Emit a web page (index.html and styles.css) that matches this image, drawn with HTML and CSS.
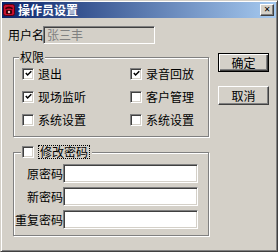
FILE: index.html
```html
<!DOCTYPE html>
<html lang="zh-CN">
<head>
    <meta charset="UTF-8">
    <title>操作员设置</title>
    <link rel="stylesheet" href="styles.css">
</head>
<body>
    <div class="window">
        <div class="titlebar">
            <svg class="app-icon" width="12" height="12" viewBox="0 0 12 12">
                <rect x="0.5" y="0.5" width="11" height="11" rx="2" fill="#c8102e" stroke="#5a0010"/>
                <path d="M2 4 Q6 1 10 4 L9 5.5 L7.5 4.5 L4.5 4.5 L3 5.5 Z" fill="#3a0008"/>
                <rect x="3" y="6" width="6" height="4" rx="1" fill="#3a0008"/>
                <circle cx="6" cy="8" r="1.2" fill="#f2c0c0"/>
            </svg>
            <span class="title">操作员设置</span>
            <span class="close-btn">&#x2715;</span>
        </div>

        <div class="client">
            <div class="main">
                <div class="user-row">
                    <span class="user-label">用户名</span>
                    <span class="field field-disabled">张三丰</span>
                </div>

                <div class="group group-rights">
                    <span class="group-title">权限</span>
                    <div class="check-grid">
                        <div class="check-item"><span class="box"><svg width="7" height="7" viewBox="0 0 7 7"><path d="M0.8 3 L2.6 5 L6.3 1.2" fill="none" stroke="#000" stroke-width="1.5"/></svg></span>退出</div>
                        <div class="check-item"><span class="box"><svg width="7" height="7" viewBox="0 0 7 7"><path d="M0.8 3 L2.6 5 L6.3 1.2" fill="none" stroke="#000" stroke-width="1.5"/></svg></span>录音回放</div>
                        <div class="check-item"><span class="box"><svg width="7" height="7" viewBox="0 0 7 7"><path d="M0.8 3 L2.6 5 L6.3 1.2" fill="none" stroke="#000" stroke-width="1.5"/></svg></span>现场监听</div>
                        <div class="check-item"><span class="box"></span>客户管理</div>
                        <div class="check-item"><span class="box"></span>系统设置</div>
                        <div class="check-item"><span class="box"></span>系统设置</div>
                    </div>
                </div>

                <div class="group group-pwd">
                    <span class="group-title pwd-title"><span class="box"></span><span class="focus-text">修改密码</span></span>
                    <div class="pwd-rows">
                        <div class="pwd-row"><span class="pwd-label">原密码</span><span class="field"></span></div>
                        <div class="pwd-row"><span class="pwd-label">新密码</span><span class="field"></span></div>
                        <div class="pwd-row"><span class="pwd-label">重复密码</span><span class="field"></span></div>
                    </div>
                </div>
            </div>

            <div class="side">
                <button class="btn btn-default">确定</button>
                <button class="btn">取消</button>
            </div>
        </div>
    </div>
</body>
</html>
```

FILE: styles.css
```css
body {
    margin: 0;
    font-family: "Noto Sans CJK SC", "Liberation Sans", sans-serif;
    font-size: 12px;
    color: #000;
    background: #d4d0c8;
}

.window {
    width: 278px;
    height: 252px;
    box-sizing: border-box;
    background: #d4d0c8;
    border: 1px solid;
    border-color: #d4d0c8 #404040 #404040 #d4d0c8;
    box-shadow: inset 1px 1px 0 #fff, inset -1px -1px 0 #808080;
    padding: 1px;
}

.titlebar {
    height: 16px;
    display: flex;
    align-items: center;
    background: linear-gradient(to right, #0a246a, #a6caf0);
    padding: 0 2px 0 1px;
}

.app-icon {
    flex: none;
}

.title {
    flex: 1;
    margin-left: 3px;
    color: #fff;
    font-weight: bold;
    line-height: 14px;
}

.close-btn {
    width: 14px;
    height: 12px;
    box-sizing: border-box;
    background: #d4d0c8;
    border: 1px solid;
    border-color: #fff #404040 #404040 #fff;
    box-shadow: inset -1px -1px 0 #808080;
    font-size: 8px;
    font-weight: bold;
    line-height: 10px;
    text-align: center;
    font-family: "DejaVu Sans", sans-serif;
}

.client {
    display: flex;
}

.main {
    width: 208px;
}

.user-row {
    display: flex;
    align-items: center;
    margin-top: 8px;
    margin-left: 6px;
}

.user-label {
    flex: none;
    width: 35px;
    white-space: nowrap;
    line-height: 14px;
}

.field {
    display: block;
    box-sizing: border-box;
    background: #fff;
    border: 1px solid;
    border-color: #808080 #fff #fff #808080;
    box-shadow: inset 1px 1px 0 #404040, inset -1px -1px 0 #d4d0c8;
}

.field-disabled {
    width: 112px;
    height: 18px;
    background: #d4d0c8;
    color: #808080;
    padding-left: 3px;
    line-height: 15px;
}

.group {
    margin-left: 11px;
    width: 196px;
    box-sizing: border-box;
    border: 1px solid #808080;
    box-shadow: 1px 1px 0 #fff, inset 1px 1px 0 #fff;
}

.group-rights {
    margin-top: 13px;
    padding-bottom: 5px;
}

.group-pwd {
    margin-top: 15px;
    padding-bottom: 6px;
}

.group-title {
    display: block;
    width: fit-content;
    margin: -8px 0 0 5px;
    padding: 0 1px;
    background: #d4d0c8;
    line-height: 14px;
}

.check-grid {
    display: grid;
    grid-template-columns: 108px 1fr;
    grid-auto-rows: 23px;
    margin-top: -2px;
    padding-left: 8px;
}

.check-item {
    display: flex;
    align-items: center;
}

.box {
    width: 12px;
    height: 12px;
    box-sizing: border-box;
    flex: none;
    display: flex;
    align-items: center;
    justify-content: center;
    background: #fff;
    border: 1px solid;
    border-color: #808080 #fff #fff #808080;
    box-shadow: inset 1px 1px 0 #404040, inset -1px -1px 0 #d4d0c8;
    margin-right: 4px;
}

.pwd-title {
    display: flex;
    align-items: center;
    margin-left: 7px;
    padding: 0 2px 0 1px;
}

.focus-text {
    border: 1px dotted #000;
    padding: 0 1px;
    line-height: 12px;
}

.pwd-rows {
    display: flex;
    flex-direction: column;
    gap: 4px;
    margin-top: 5px;
}

.pwd-row {
    display: flex;
    align-items: center;
}

.pwd-label {
    width: 49px;
    text-align: right;
    line-height: 14px;
}

.pwd-row .field {
    width: 135px;
    height: 19px;
}

.side {
    display: flex;
    flex-direction: column;
    margin-left: 8px;
    padding-top: 35px;
    gap: 14px;
}

.btn {
    width: 51px;
    height: 19px;
    padding: 0;
    font: inherit;
    line-height: 14px;
    background: #d4d0c8;
    border: 1px solid;
    border-color: #fff #404040 #404040 #fff;
    box-shadow: inset -1px -1px 0 #808080;
}

.btn-default {
    border: 1px solid #000;
    box-shadow: inset 1px 1px 0 #fff, inset -1px -1px 0 #404040, inset -2px -2px 0 #808080;
}
```
